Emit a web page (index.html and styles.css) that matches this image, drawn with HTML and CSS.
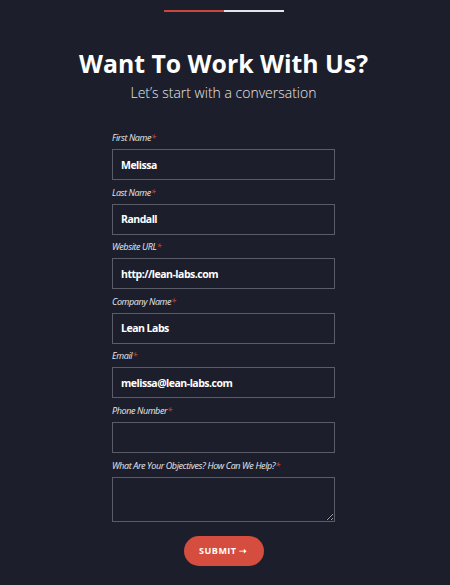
FILE: index.html
```html
<!DOCTYPE html>
<html lang="en">
<head>
    <meta charset="UTF-8">
    <meta name="viewport" content="width=device-width, initial-scale=1.0">
    <title>Want To Work With Us?</title>
    <link rel="stylesheet" href="styles.css">
</head>
<body>
    <div class="page">
        <div class="progress">
            <span class="progress-done"></span>
            <span class="progress-left"></span>
        </div>

        <h1 class="title">Want To Work With Us?</h1>
        <p class="subtitle">Let’s start with a conversation</p>

        <form class="contact-form">
            <div class="field">
                <label for="first">First Name<span class="req">*</span></label>
                <input type="text" id="first" value="Melissa">
            </div>
            <div class="field">
                <label for="last">Last Name<span class="req">*</span></label>
                <input type="text" id="last" value="Randall">
            </div>
            <div class="field">
                <label for="url">Website URL<span class="req">*</span></label>
                <input type="text" id="url" value="http://lean-labs.com">
            </div>
            <div class="field">
                <label for="company">Company Name<span class="req">*</span></label>
                <input type="text" id="company" value="Lean Labs">
            </div>
            <div class="field">
                <label for="email">Email<span class="req">*</span></label>
                <input type="email" id="email" value="melissa@lean-labs.com">
            </div>
            <div class="field">
                <label for="phone">Phone Number<span class="req">*</span></label>
                <input type="tel" id="phone">
            </div>
            <div class="field">
                <label for="help">What Are Your Objectives? How Can We Help?<span class="req">*</span></label>
                <textarea id="help"></textarea>
            </div>
            <button type="button" class="submit">SUBMIT <span class="arrow">&#10141;</span></button>
        </form>
    </div>
</body>
</html>
```

FILE: styles.css
```css
body {
    background-color: #1c1f2b;
    color: white;
    font-family: "Open Sans", Arial, sans-serif;
    margin: 0;
    padding: 0;
}

.page {
    width: 447px;
    text-align: center;
}

.progress {
    display: flex;
    width: 120px;
    height: 2px;
    margin: 10px auto 0;
}

.progress-done {
    flex: 1;
    background-color: #c9473b;
}

.progress-left {
    flex: 1;
    background-color: #e4e4e8;
}

.title {
    font-size: 24.8px;
    font-weight: 700;
    line-height: 32px;
    margin: 35px 0 0;
}

.subtitle {
    font-size: 14px;
    font-weight: 300;
    line-height: 18px;
    color: #e6e6ea;
    margin: 5px 0 0;
}

.contact-form {
    width: 223px;
    margin: 29px auto 0;
    text-align: left;
}

.field {
    margin-bottom: 5.6px;
}

label {
    display: block;
    font-size: 9px;
    font-style: italic;
    line-height: 14px;
    color: #e8e8ec;
    margin-bottom: 4px;
    letter-spacing: -0.4px;
}

.req {
    color: #d44d3e;
}

input, textarea {
    display: block;
    box-sizing: border-box;
    width: 100%;
    height: 31px;
    padding: 0 8px;
    background-color: transparent;
    border: 1px solid #5a5d68;
    border-radius: 0;
    color: white;
    font-family: "Open Sans", Arial, sans-serif;
    font-size: 10.5px;
    font-weight: 700;
    letter-spacing: -0.5px;
    outline: none;
}

textarea {
    height: 45px;
    resize: vertical;
}

.submit {
    display: block;
    width: 80px;
    height: 30px;
    margin: 14px auto 0;
    padding: 0;
    background-color: #d44d3e;
    border: none;
    border-radius: 15px;
    color: white;
    font-family: "Open Sans", Arial, sans-serif;
    font-size: 9px;
    font-weight: 700;
    letter-spacing: 0.5px;
    cursor: pointer;
}

.arrow {
    font-size: 9px;
}
```
